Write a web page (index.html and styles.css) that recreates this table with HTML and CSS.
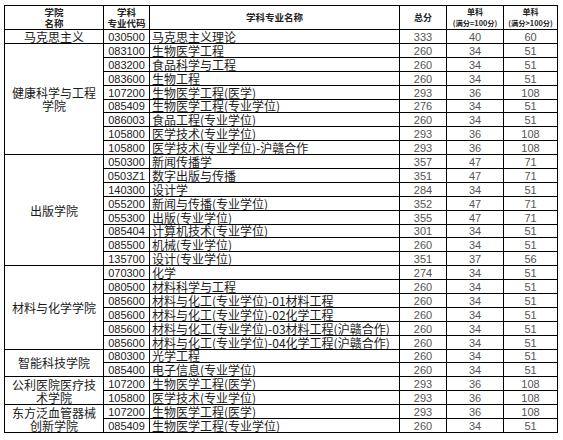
FILE: index.html
```html
<!DOCTYPE html>
<html lang="zh-CN">
<head>
<meta charset="utf-8">
<link rel="stylesheet" href="styles.css">
</head>
<body>
<table class="score">
  <colgroup>
    <col class="c-school"><col class="c-code"><col class="c-name"><col class="c-total"><col class="c-s1"><col class="c-s2">
  </colgroup>
  <thead>
    <tr class="head">
      <th>学院<br>名称</th>
      <th>学科<br>专业代码</th>
      <th>学科专业名称</th>
      <th class="big">总分</th>
      <th class="small"><span class="sub1">单科</span><br>(满分=100分)</th>
      <th class="small"><span class="sub1">单科</span><br>(满分&gt;100分)</th>
    </tr>
  </thead>
  <tbody>
    <tr><td class="school">马克思主义</td><td class="code">030500</td><td class="name">马克思主义理论</td><td class="num">333</td><td class="num">40</td><td class="num">60</td></tr>

    <tr><td class="school" rowspan="8">健康科学与工程学院</td><td class="code">083100</td><td class="name">生物医学工程</td><td class="num">260</td><td class="num">34</td><td class="num">51</td></tr>
    <tr><td class="code">083200</td><td class="name">食品科学与工程</td><td class="num">260</td><td class="num">34</td><td class="num">51</td></tr>
    <tr><td class="code">083600</td><td class="name">生物工程</td><td class="num">260</td><td class="num">34</td><td class="num">51</td></tr>
    <tr><td class="code">107200</td><td class="name">生物医学工程(医学)</td><td class="num">293</td><td class="num">36</td><td class="num">108</td></tr>
    <tr><td class="code">085409</td><td class="name">生物医学工程(专业学位)</td><td class="num">276</td><td class="num">34</td><td class="num">51</td></tr>
    <tr><td class="code">086003</td><td class="name">食品工程(专业学位)</td><td class="num">260</td><td class="num">34</td><td class="num">51</td></tr>
    <tr><td class="code">105800</td><td class="name">医学技术(专业学位)</td><td class="num">293</td><td class="num">36</td><td class="num">108</td></tr>
    <tr><td class="code">105800</td><td class="name">医学技术(专业学位)-沪赣合作</td><td class="num">293</td><td class="num">36</td><td class="num">108</td></tr>

    <tr><td class="school" rowspan="8">出版学院</td><td class="code">050300</td><td class="name">新闻传播学</td><td class="num">357</td><td class="num">47</td><td class="num">71</td></tr>
    <tr><td class="code">0503Z1</td><td class="name">数字出版与传播</td><td class="num">351</td><td class="num">47</td><td class="num">71</td></tr>
    <tr><td class="code">140300</td><td class="name">设计学</td><td class="num">284</td><td class="num">34</td><td class="num">51</td></tr>
    <tr><td class="code">055200</td><td class="name">新闻与传播(专业学位)</td><td class="num">352</td><td class="num">47</td><td class="num">71</td></tr>
    <tr><td class="code">055300</td><td class="name">出版(专业学位)</td><td class="num">355</td><td class="num">47</td><td class="num">71</td></tr>
    <tr><td class="code">085404</td><td class="name">计算机技术(专业学位)</td><td class="num">301</td><td class="num">34</td><td class="num">51</td></tr>
    <tr><td class="code">085500</td><td class="name">机械(专业学位)</td><td class="num">260</td><td class="num">34</td><td class="num">51</td></tr>
    <tr><td class="code">135700</td><td class="name">设计(专业学位)</td><td class="num">351</td><td class="num">37</td><td class="num">56</td></tr>

    <tr><td class="school" rowspan="6">材料与化学学院</td><td class="code">070300</td><td class="name">化学</td><td class="num">274</td><td class="num">34</td><td class="num">51</td></tr>
    <tr><td class="code">080500</td><td class="name">材料科学与工程</td><td class="num">260</td><td class="num">34</td><td class="num">51</td></tr>
    <tr><td class="code">085600</td><td class="name">材料与化工(专业学位)-01材料工程</td><td class="num">260</td><td class="num">34</td><td class="num">51</td></tr>
    <tr><td class="code">085600</td><td class="name">材料与化工(专业学位)-02化学工程</td><td class="num">260</td><td class="num">34</td><td class="num">51</td></tr>
    <tr><td class="code">085600</td><td class="name">材料与化工(专业学位)-03材料工程(沪赣合作)</td><td class="num">260</td><td class="num">34</td><td class="num">51</td></tr>
    <tr><td class="code">085600</td><td class="name">材料与化工(专业学位)-04化学工程(沪赣合作)</td><td class="num">260</td><td class="num">34</td><td class="num">51</td></tr>

    <tr><td class="school" rowspan="2">智能科技学院</td><td class="code">080300</td><td class="name">光学工程</td><td class="num">260</td><td class="num">34</td><td class="num">51</td></tr>
    <tr><td class="code">085400</td><td class="name">电子信息(专业学位)</td><td class="num">260</td><td class="num">34</td><td class="num">51</td></tr>

    <tr><td class="school" rowspan="2">公利医院医疗技术学院</td><td class="code">107200</td><td class="name">生物医学工程(医学)</td><td class="num">293</td><td class="num">36</td><td class="num">108</td></tr>
    <tr><td class="code">105800</td><td class="name">医学技术(专业学位)</td><td class="num">293</td><td class="num">36</td><td class="num">108</td></tr>

    <tr><td class="school" rowspan="2">东方泛血管器械创新学院</td><td class="code">107200</td><td class="name">生物医学工程(医学)</td><td class="num">293</td><td class="num">36</td><td class="num">108</td></tr>
    <tr><td class="code">085409</td><td class="name">生物医学工程(专业学位)</td><td class="num">260</td><td class="num">34</td><td class="num">51</td></tr>
  </tbody>
</table>
</body>
</html>
```

FILE: styles.css
```css
html, body {
  margin: 0;
  padding: 0;
  background: #fff;
}
body {
  padding: 5px 0 0 4px;
  font-family: "Noto Sans CJK SC", sans-serif;
  color: #111;
}
.score {
  border-collapse: collapse;
  table-layout: fixed;
  width: 554px;
}
.c-school { width: 99px; }
.c-code { width: 46px; }
.c-name { width: 250px; }
.c-total { width: 47px; }
.c-s1 { width: 57px; }
.c-s2 { width: 54px; }

.score th, .score td {
  border: 1px solid #000;
  padding: 0;
  white-space: nowrap;
}
.score tbody tr { height: 13.9px; }
.head { height: 24px; }
.score th {
  font-weight: 700;
  font-size: 9.5px;
  line-height: 11px;
  text-align: center;
  vertical-align: middle;
  color: #222;
}
.score th.big { font-size: 9px; }
.score th.small { font-size: 7.3px; line-height: 11px; }
.score th .sub1 { font-size: 8px; }

.score td {
  font-size: 12px;
  line-height: 12px;
  height: 12px;
  vertical-align: bottom;
}
.score td.school {
  white-space: normal;
  text-align: center;
  vertical-align: middle;
  line-height: 13px;
  padding: 0 4px;
  color: #1a1a1a;
}
.score td.code {
  font-family: "Liberation Sans", sans-serif;
  font-size: 11px;
  text-align: center;
  color: #222;
}
.score td.name {
  text-align: left;
  padding-left: 2px;
  color: #1a1a1a;
}
.score td.num {
  font-family: "Liberation Sans", sans-serif;
  font-size: 11px;
  text-align: center;
  color: #555;
}
```
